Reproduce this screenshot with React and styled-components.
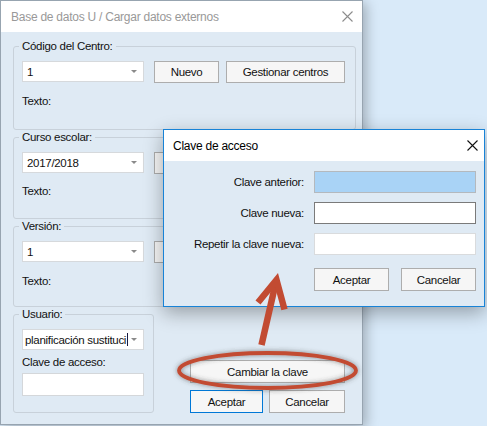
import React from 'react';
import styled, { createGlobalStyle } from 'styled-components';

const Global = createGlobalStyle`
  html, body { margin: 0; padding: 0; }
  body {
    width: 487px; height: 426px; overflow: hidden;
    background: #d9eaf9;
    font-family: "Liberation Sans", Arial, sans-serif;
  }
  * { box-sizing: border-box; }
`;

const Desktop = styled.div`
  position: relative;
  width: 487px;
  height: 426px;
  overflow: hidden;
  background: #d9eaf9;
`;

const Window = styled.div`
  position: absolute;
  left: ${p => p.$x}px;
  top: ${p => p.$y}px;
  width: ${p => p.$w}px;
  height: ${p => p.$h}px;
  border: 1px solid ${p => (p.$active ? '#1883d7' : '#97a4b0')};
  background: #dfeaf4;
  box-shadow: ${p => (p.$active ? '0 6px 18px rgba(0,0,0,0.32)' : '3px 3px 12px rgba(0,0,0,0.28)')};
  display: flex;
  flex-direction: column;
`;

const TitleBar = styled.div`
  height: 31px;
  flex: none;
  background: #fff;
  display: flex;
  align-items: center;
  justify-content: space-between;
  padding: 0 ${p => p.$pr}px 0 ${p => p.$pl}px;
  font-size: 12px;
  letter-spacing: -0.25px;
  color: ${p => (p.$active ? '#000' : '#999')};
`;

const MainBody = styled.div`
  flex: 1;
  display: flex;
  flex-direction: column;
  gap: 1px;
  padding: 8px 6px 0 12px;
  font-size: 11.5px;
  letter-spacing: -0.3px;
  color: #111;
`;

const Group = styled.fieldset`
  margin: 0;
  min-width: 0;
  border: 1px solid #c8d1da;
  border-radius: 3px;
  padding: 9px 8px 0 8px;
  height: ${p => p.$h}px;
  width: ${p => (p.$w ? `${p.$w}px` : 'auto')};
  display: flex;
  flex-direction: column;
  align-items: flex-start;
`;

const Legend = styled.legend`
  padding: 0 3px;
  margin-left: -3px;
  line-height: 12px;
  font-size: 11.5px;
`;

const Row = styled.div`
  display: flex;
  align-items: flex-start;
`;

const Combo = styled.div`
  width: ${p => p.$w}px;
  height: 21px;
  flex: none;
  background: #fff;
  border: 1px solid #d6d9dc;
  display: flex;
  align-items: center;
  padding: 0 6px 0 ${p => p.$pl || 4}px;
  white-space: nowrap;
  overflow: hidden;
`;

const ComboText = styled.span`
  flex: 1;
  overflow: hidden;
  display: flex;
  align-items: center;
`;

const Caret = styled.span`
  display: inline-block;
  flex: none;
  width: 1px;
  height: 13px;
  background: #1a1a40;
  margin-left: 1px;
`;

const Arrow = styled.span`
  width: 0;
  height: 0;
  flex: none;
  border-left: 3px solid transparent;
  border-right: 3px solid transparent;
  border-top: 3px solid #8a8a8a;
  margin-left: 3px;
`;

const Button = styled.div`
  width: ${p => p.$w}px;
  height: ${p => p.$h || 22}px;
  margin-left: ${p => p.$ml || 0}px;
  flex: none;
  background: #f6f6f6;
  border: 1px solid ${p => (p.$default ? '#0078d7' : '#adadad')};
  display: flex;
  align-items: center;
  justify-content: center;
  white-space: nowrap;
  font-size: 11.5px;
  color: #111;
`;

const Label = styled.div`
  line-height: 14px;
  margin-top: ${p => p.$mt || 0}px;
`;

const TextBox = styled.div`
  width: ${p => p.$w}px;
  height: ${p => p.$h}px;
  margin-top: ${p => p.$mt || 0}px;
  background: ${p => (p.$selected ? '#a9d3f6' : '#fff')};
  border: 1px solid ${p => p.$border || '#d4d7da'};
`;

const BottomRow = styled.div`
  display: flex;
  align-items: flex-end;
`;

const ActionColumn = styled.div`
  display: flex;
  flex-direction: column;
  gap: 7px;
  margin-left: 36px;
`;

const ButtonPair = styled.div`
  display: flex;
  gap: ${p => p.$gap}px;
`;

const DialogBody = styled.div`
  flex: 1;
  display: grid;
  grid-template-columns: 1fr 162px;
  column-gap: 10px;
  row-gap: 9px;
  align-items: center;
  align-content: start;
  padding: 10px 8px 0 0;
  font-size: 11.5px;
  letter-spacing: -0.3px;
  color: #111;
`;

const FieldLabel = styled.div`
  text-align: right;
  white-space: nowrap;
`;

const DialogButtons = styled.div`
  grid-column: 2;
  display: flex;
  gap: 12px;
  margin-top: 4px;
`;

const Overlay = styled.svg`
  position: absolute;
  left: 0;
  top: 0;
  pointer-events: none;
`;

const CloseIcon = ({ color }) => (
  <svg width="11" height="11" viewBox="0 0 11 11">
    <path d="M0.5 0.5 L10.5 10.5 M10.5 0.5 L0.5 10.5" stroke={color} strokeWidth="1.1" fill="none" />
  </svg>
);

export default function App() {
  return (
    <>
      <Global />
      <Desktop>
        <Window $x={0} $y={0} $w={363} $h={425}>
          <TitleBar $pl={10} $pr={9}>
            <span>Base de datos U / Cargar datos externos</span>
            <CloseIcon color="#8c8c8c" />
          </TitleBar>
          <MainBody>
            <Group $h={90}>
              <Legend>Código del Centro:</Legend>
              <Row>
                <Combo $w={122}>
                  <ComboText>1</ComboText>
                  <Arrow />
                </Combo>
                <Button $w={65} $ml={10}>Nuevo</Button>
                <Button $w={119} $ml={7}>Gestionar centros</Button>
              </Row>
              <Label $mt={11}>Texto:</Label>
            </Group>
            <Group $h={88}>
              <Legend>Curso escolar:</Legend>
              <Row>
                <Combo $w={122}>
                  <ComboText>2017/2018</ComboText>
                  <Arrow />
                </Combo>
                <Button $w={65} $ml={10}>Nuevo</Button>
              </Row>
              <Label $mt={10}>Texto:</Label>
            </Group>
            <Group $h={87}>
              <Legend>Versión:</Legend>
              <Row>
                <Combo $w={122}>
                  <ComboText>1</ComboText>
                  <Arrow />
                </Combo>
                <Button $w={65} $ml={10}>Nuevo</Button>
              </Row>
              <Label $mt={11}>Texto:</Label>
            </Group>
            <BottomRow>
              <Group $h={105} $w={141}>
                <Legend>Usuario:</Legend>
                <Combo $w={122} $pl={2}>
                  <ComboText>
                    planificación sustituci
                    <Caret />
                  </ComboText>
                  <Arrow />
                </Combo>
                <Label $mt={5}>Clave de acceso:</Label>
                <TextBox $w={122} $h={23} $mt={4} />
              </Group>
              <ActionColumn>
                <Button $w={155} $h={23}>Cambiar la clave</Button>
                <ButtonPair $gap={6}>
                  <Button $w={73} $h={23} $default>Aceptar</Button>
                  <Button $w={76} $h={23}>Cancelar</Button>
                </ButtonPair>
              </ActionColumn>
            </BottomRow>
          </MainBody>
        </Window>

        <Window $x={163} $y={129} $w={322} $h={178} $active>
          <TitleBar $pl={9} $pr={6} $active>
            <span>Clave de acceso</span>
            <CloseIcon color="#111" />
          </TitleBar>
          <DialogBody>
            <FieldLabel>Clave anterior:</FieldLabel>
            <TextBox $w={162} $h={22} $selected $border="#b4b9be" />
            <FieldLabel>Clave nueva:</FieldLabel>
            <TextBox $w={162} $h={22} $border="#7a7a7a" />
            <FieldLabel>Repetir la clave nueva:</FieldLabel>
            <TextBox $w={162} $h={22} $border="#d9dbdd" />
            <DialogButtons>
              <Button $w={75} $h={23}>Aceptar</Button>
              <Button $w={75} $h={23}>Cancelar</Button>
            </DialogButtons>
          </DialogBody>
        </Window>

        <Overlay width="487" height="426" viewBox="0 0 487 426">
          <defs>
            <filter id="glow" x="-20%" y="-50%" width="140%" height="200%">
              <feDropShadow dx="0" dy="0" stdDeviation="2.4" floodColor="#3c3c3c" floodOpacity="0.6" />
            </filter>
          </defs>
          <g filter="url(#glow)">
            <ellipse cx="267.5" cy="370.5" rx="88.5" ry="17.5" fill="none" stroke="#c24b32" strokeWidth="3.8" />
          </g>
          <g stroke="#c24b32" strokeWidth="6.5" fill="none" strokeLinejoin="miter" strokeMiterlimit="10">
            <path d="M261.5 345 L275 286" strokeLinecap="butt" />
            <path d="M258 302.5 L276.5 280 L284.5 309.5" strokeLinecap="butt" />
          </g>
        </Overlay>
      </Desktop>
    </>
  );
}
